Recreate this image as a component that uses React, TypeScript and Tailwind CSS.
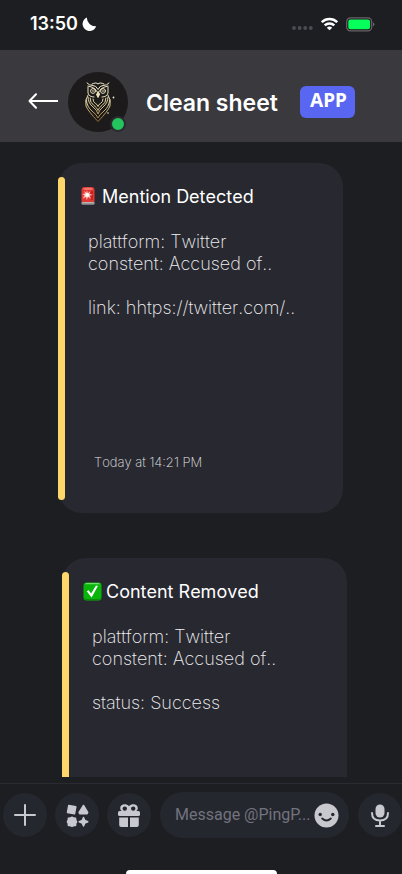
import type { ReactNode } from "react";

function Siren() {
  return (
    <svg width="19" height="20" viewBox="-1 1 19 20" aria-hidden="true">
      <path d="M2 15h12l1 2-1 2H2l-1-2z" fill="#77777d" />
      <path d="M2.5 16h11l.7 1.4H1.8z" fill="#b9b4b4" />
      <path d="M1.500 4Q1.500 1 4.500 1h7q3 0 3 3v11q0 1-2 1h-9q-2 0-2-1z" fill="#e13a35" />
      <path d="M3 2.500q5-1.600 10 0l-1 1.300H4z" fill="#f47a72" />
      <path d="M10 5h3v9h-2z" fill="#c8211f" />
      <path d="M7 4l.8 3.200L10.600 5 9.400 8l3.600.8-3.400 1 1.400 3-3-1.800L6.800 14 6 11l-3.400 1.500L4.600 9.600 2.200 8l3-.4L4 5l2.400 1.800z" fill="#ffc2b9" />
      <circle cx="7.300" cy="8.900" r="1.900" fill="#fff" />
    </svg>
  );
}

function CheckMark() {
  return (
    <svg width="19" height="19" viewBox="0 0 19 19" className="-mt-0.5" aria-hidden="true">
      <rect x=".5" y=".5" width="18" height="18" rx="3" fill="#09b50b" />
      <path d="M2 2.200Q2.500 1 4 1h11q1.500 0 2 1.200z" fill="#72dc6d" />
      <path d="M1 15v1q0 2 2 2h13q2 0 2-2v-1q-1 2-2 2H3q-1 0-2-2z" fill="#078e0b" />
      <path d="M3.700 9.300l2-1 2.400 3.200L13 3.400l1.900.7L8.600 15.400z" fill="#fff" />
    </svg>
  );
}

function Owl() {
  return (
    <svg viewBox="0 0 60 60" className="size-full" fill="none" aria-hidden="true">
      <defs>
        <linearGradient id="owl-gold" x1="0" y1="10" x2="0" y2="50" gradientUnits="userSpaceOnUse">
          <stop offset="0" stopColor="#f3edd0" />
          <stop offset=".55" stopColor="#ddcf9c" />
          <stop offset="1" stopColor="#8f6825" />
        </linearGradient>
      </defs>
      <g stroke="url(#owl-gold)" strokeWidth="1" strokeLinecap="round" strokeLinejoin="round">
        <path d="M19 11q2 2.500 6 2.500 3 0 5 4 2-4 5-4 4 0 6-2.500M20 14q5 1 7 3l3 4 3-4q2-2 7-3M24 12q4-2 6 0 2-2 6 0" />
        <path d="M20 15v6q1 4 6 4M40 15v6q-1 4-6 4" />
        <circle cx="25" cy="19" r="2.400" />
        <circle cx="35" cy="19" r="2.400" />
        <path d="M30 20l-1.500 2.500 1.500 3 1.500-3z" fill="#f3edd0" />
        <path d="M20 23q-3.500 5-2 11 2 5 12 15.500Q40 39 42 34q1.500-6-2-11" />
        <path d="M20 25q0 6 5 10 4 3 5 7 1-4 5-7 5-4 5-10M18.300 28q.7 7 5.700 11 5 4 6 7 1-3 6-7t5.700-11" />
        <path d="M22 26q0 5 4 7.500 3 2 4 5 1-3 4-5 4-2.500 4-7.500M25 27q0 3 2.500 4.500 2 1 2.500 3 .5-2 2.500-3Q35 30 35 27" />
      </g>
      <g fill="#f1ead0">
        <circle cx="25" cy="19" r=".8" />
        <circle cx="35" cy="19" r=".8" />
        <circle cx="45.500" cy="25.500" r=".9" />
        <circle cx="40" cy="41" r=".8" />
      </g>
    </svg>
  );
}

function StatusBar() {
  return (
    <div className="flex h-[50px] shrink-0 items-center justify-between pl-[30px] pr-[27px] pb-0.5">
      <div className="flex items-center gap-1 text-lg font-semibold leading-6">
        <span>13:50</span>
        <svg width="15" height="15" viewBox="0 0 15 15" aria-hidden="true">
          <path d="M5 .5A7 7 0 1 0 14.200 9.300 8.300 8.300 0 0 1 5 .5z" fill="#fff" />
        </svg>
      </div>
      <div className="flex items-center gap-2">
        <svg width="21" height="14" viewBox="0 0 21 14" fill="#4c4d53" aria-hidden="true">
          <circle cx="2" cy="11" r="1.900" />
          <circle cx="7.600" cy="11" r="1.900" />
          <circle cx="13.200" cy="11" r="1.900" />
          <circle cx="18.800" cy="11" r="1.900" />
        </svg>
        <svg width="17" height="14" viewBox="0 0 17 14" fill="none" stroke="#fff" strokeWidth="2.500" aria-hidden="true">
          <path d="M.8 5.200a11 11 0 0 1 15.400 0" />
          <path d="M3.700 8.400a6.900 6.900 0 0 1 9.600 0" />
          <path d="M8.500 13.300L5.800 10.700q2.700-2.300 5.400 0z" fill="#fff" stroke="none" />
        </svg>
        <svg width="29" height="15" viewBox="0 0 29 15" aria-hidden="true">
          <rect x=".7" y=".9" width="25" height="13" rx="3.800" fill="none" stroke="#6b6266" strokeWidth="1.200" />
          <rect x="2.300" y="2.500" width="21.800" height="9.800" rx="2.200" fill="#06ff5a" />
          <path d="M27 5.300q3 2.100 0 4.200z" fill="#6b6266" />
        </svg>
      </div>
    </div>
  );
}

function ChatHeader() {
  return (
    <header className="flex h-[92px] shrink-0 items-center bg-[#39393e] pt-2.5 pl-7">
      <button aria-label="Back" className="shrink-0">
        <svg width="30" height="16" viewBox="0 0 30 16" fill="none" stroke="#fff" strokeWidth="2" strokeLinecap="round" strokeLinejoin="round" aria-hidden="true">
          <path d="M30 8H1.500M8 1.200L1.500 8 8 14.800" />
        </svg>
      </button>
      <div className="relative mt-0.5 ml-2.5 size-[60px] shrink-0 rounded-full bg-[#1c1a1a]">
        <Owl />
        <span className="absolute right-0.5 bottom-0 size-4 rounded-full border-2 border-[#2b2b30] bg-[#23c55e]" />
      </div>
      <h1 className="mt-1 ml-[18px] shrink-0 text-[23px] leading-8 font-semibold">Clean sheet</h1>
      <span className="mt-0.5 ml-[22px] flex h-8 w-[55px] items-center justify-center rounded-md bg-[#5966f2] pb-1 pl-0.5 font-['Noto_Sans',sans-serif] text-[19px] leading-7 font-bold">
        APP
      </span>
    </header>
  );
}

function AlertCard({ icon, title, lines, extra, time, className }: {
  icon: ReactNode;
  title: string;
  lines: string[];
  extra: string;
  time?: string;
  className: string;
}) {
  return (
    <article className={`flex h-[350px] w-[285px] shrink-0 rounded-3xl bg-[#282830] [font-kerning:none] ${className}`}>
      <div className="mt-3.5 h-[323px] w-[7px] shrink-0 rounded-full bg-[#ffd66b]" />
      <div className="min-w-0 flex-1 pt-[22px] pl-3.5">
        <h2 className="flex items-center gap-1 text-lg leading-6">
          {icon}
          {title}
        </h2>
        <div className="mt-[22px] pl-[9px] text-lg leading-[22px] font-extralight text-[#f0f0f2]">
          {lines.map((line) => (
            <p key={line}>{line}</p>
          ))}
          <p className="mt-[22px]">{extra}</p>
        </div>
        {time && <p className="mt-[133px] pl-[15px] text-[13px] leading-5 font-extralight text-[#e4e4e7]">{time}</p>}
      </div>
    </article>
  );
}

function RoundButton({ label, children }: { label: string; children: ReactNode }) {
  return (
    <button aria-label={label} className="flex size-11 shrink-0 items-center justify-center rounded-full bg-[#25272e] text-[#c8c8cf]">
      {children}
    </button>
  );
}

function Composer() {
  return (
    <footer className="mt-1.5 h-[91px] shrink-0 overflow-hidden border-t border-[#2a2a30]">
      <div className="mt-2 flex items-center gap-2 pl-[3px]">
        <RoundButton label="Add attachment">
          <svg width="22" height="22" viewBox="0 0 22 22" fill="none" stroke="currentColor" strokeWidth="2" strokeLinecap="round" aria-hidden="true">
            <path d="M11 1v20M1 11h20" />
          </svg>
        </RoundButton>
        <RoundButton label="Apps">
          <svg width="23" height="23" viewBox="0 0 23 23" fill="currentColor" stroke="currentColor" strokeWidth="1.500" strokeLinejoin="round" aria-hidden="true">
            <path d="M2.800 1.500l7 1.300-1.300 7-7-1.400zM17.500 1.500l4.200 7-.6 1.200h-7.400l-.6-1.200z" />
            <path d="M6 13.200l1.700.9 1.900.1.100 1.900.9 1.700-.9 1.700-.1 1.900-1.900.1-1.700.9-1.700-.9-1.900-.1-.1-1.900-.9-1.700.9-1.700.1-1.900 1.900-.1z" />
            <path d="M17.500 13.500l1.300 3 3 1.200-3 1.300-1.300 3-1.300-3-3-1.300 3-1.200z" />
          </svg>
        </RoundButton>
        <RoundButton label="Send a gift">
          <svg width="22" height="23" viewBox="0 0 22 23" fill="currentColor" aria-hidden="true">
            <path d="M11 2.200C8.500-.6 2.200-.4 2.200 4.200 2.200 7 5 8 11 8s8.800-1 8.800-3.800C19.800-.4 13.500-.6 11 2.200z" />
            <circle cx="6.800" cy="4.600" r="2.200" fill="#25272e" />
            <circle cx="15.200" cy="4.600" r="2.200" fill="#25272e" />
            <rect y="7" width="22" height="5" rx="1.500" />
            <path d="M1.200 13.500H10V23H3.200q-2 0-2-2zM12 13.500h8.800V21q0 2-2 2H12z" />
          </svg>
        </RoundButton>
        <div className="ml-px flex h-[46px] min-w-0 flex-1 items-center rounded-full bg-[#25272e] pr-2.5 pl-[15px]">
          <input
            type="text"
            aria-label="Message"
            placeholder="Message @PingP..."
            className="min-w-0 flex-1 bg-transparent font-[Roboto,sans-serif] text-base font-normal outline-none placeholder:text-[#72737e]"
          />
          <button aria-label="Choose an emoji" className="shrink-0">
            <svg width="25" height="25" viewBox="0 0 25 25" aria-hidden="true">
              <circle cx="12.500" cy="12.500" r="12" fill="#c8c8cf" />
              <circle cx="6.200" cy="11.500" r="1.700" fill="#25272e" />
              <circle cx="18.800" cy="11.500" r="1.700" fill="#25272e" />
              <path d="M8.200 15.500q4.300 4 8.600 0" fill="none" stroke="#25272e" strokeWidth="1.900" strokeLinecap="round" />
            </svg>
          </button>
        </div>
        <div className="ml-px flex">
          <RoundButton label="Record a voice message">
            <svg width="18" height="23" viewBox="0 0 18 23" fill="none" stroke="currentColor" strokeWidth="2" strokeLinecap="round" aria-hidden="true">
              <rect x="4.500" y=".5" width="9" height="13" rx="4.500" fill="currentColor" stroke="none" />
              <path d="M1 9q0 7.500 8 7.500T17 9M9 16.500V22M5 22h8" />
            </svg>
          </RoundButton>
        </div>
      </div>
      <div className="mx-auto mt-8 h-2 w-[151px] rounded-full bg-white" />
    </footer>
  );
}

export default function App() {
  return (
    <div className="flex h-screen flex-col overflow-hidden bg-[#1d1e22] font-[Inter,sans-serif] text-white">
      <StatusBar />
      <ChatHeader />
      <main className="flex min-h-0 flex-1 flex-col gap-[45px] overflow-hidden pt-[21px]">
        <AlertCard
          className="ml-[58px]"
          icon={<Siren />}
          title="Mention Detected"
          lines={["plattform: Twitter", "constent: Accused of.."]}
          extra="link: hhtps://twitter.com/.."
          time="Today at 14:21 PM"
        />
        <AlertCard
          className="ml-[62px]"
          icon={<CheckMark />}
          title="Content Removed"
          lines={["plattform: Twitter", "constent: Accused of.."]}
          extra="status: Success"
        />
      </main>
      <Composer />
    </div>
  );
}
